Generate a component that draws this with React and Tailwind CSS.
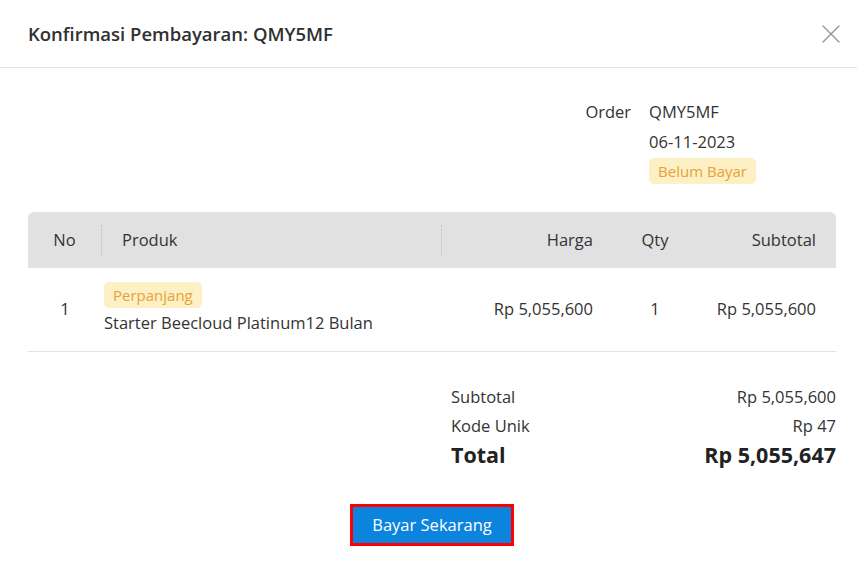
import React from 'react';
import { X } from 'lucide-react';

const font = { fontFamily: '"Open Sans", "Noto Sans", sans-serif' };

const Badge = ({ children, className = '' }) => (
    <span className={`inline-flex items-center rounded-[5px] bg-[#fdf0c4] px-[9px] h-[26px] text-[15px] text-[#e8a13a] ${className}`}>
        {children}
    </span>
);

const App = () => {
    return (
        <div className="w-[857px] h-[572px] bg-white text-[#333] overflow-hidden" style={font}>
            {/* header */}
            <div className="flex items-center justify-between h-[68px] pl-[28px] pr-[10px] border-b border-[#e5e5e5]">
                <h2 className="text-[18.5px] font-semibold text-[#303030]">Konfirmasi Pembayaran: QMY5MF</h2>
                <button className="text-[#9a9a9a]">
                    <X size={32} strokeWidth={1.1} />
                </button>
            </div>

            <div className="pl-[28px] pr-[21px] pt-[29px]">
                {/* order info */}
                <div className="flex justify-end pr-[80px]">
                    <div className="grid grid-cols-[auto_auto] gap-x-[18px] text-[16.5px] leading-[30px]">
                        <span className="text-right">Order</span>
                        <span>QMY5MF</span>
                        <span />
                        <span>06-11-2023</span>
                        <span />
                        <div className="-mt-[1px]">
                            <Badge>Belum Bayar</Badge>
                        </div>
                    </div>
                </div>

                {/* table */}
                <div className="mt-[26px] text-[16.5px]">
                    <div className="grid grid-cols-[74px_340px_171px_84px_1fr] h-[56px] items-center bg-[#e1e1e1] rounded-t-[6px]">
                        <div className="text-center border-r border-dotted border-[#bdbdbd] h-[30px] leading-[30px]">No</div>
                        <div className="pl-[20px] border-r border-dotted border-[#bdbdbd] h-[30px] leading-[30px]">Produk</div>
                        <div className="text-right pr-[20px]">Harga</div>
                        <div className="text-center">Qty</div>
                        <div className="text-right pr-[20px]">Subtotal</div>
                    </div>
                    <div className="grid grid-cols-[74px_340px_171px_84px_1fr] h-[84px] items-center border-b border-[#e3e3e3]">
                        <div className="text-center">1</div>
                        <div className="pl-[2px] flex flex-col items-start gap-[3px] -mt-[1px]">
                            <Badge>Perpanjang</Badge>
                            <span>Starter Beecloud Platinum12 Bulan</span>
                        </div>
                        <div className="text-right pr-[20px]">Rp 5,055,600</div>
                        <div className="text-center">1</div>
                        <div className="text-right pr-[20px]">Rp 5,055,600</div>
                    </div>
                </div>

                {/* summary */}
                <div className="flex justify-end mt-[30px]">
                    <div className="w-[385px] text-[16.5px]">
                        <div className="flex justify-between leading-[29px]">
                            <span>Subtotal</span>
                            <span>Rp 5,055,600</span>
                        </div>
                        <div className="flex justify-between leading-[29px]">
                            <span>Kode Unik</span>
                            <span>Rp 47</span>
                        </div>
                        <div className="flex justify-between leading-[29px] text-[21.5px] font-bold text-[#222]">
                            <span>Total</span>
                            <span>Rp 5,055,647</span>
                        </div>
                    </div>
                </div>

                {/* action */}
                <div className="flex justify-center mt-[35px]">
                    <button className="border-[3px] border-[#ff0000] bg-[#0b84de] text-white text-[16.5px] h-[42px] w-[164px]">
                        Bayar Sekarang
                    </button>
                </div>
            </div>
        </div>
    );
};

export default App;
